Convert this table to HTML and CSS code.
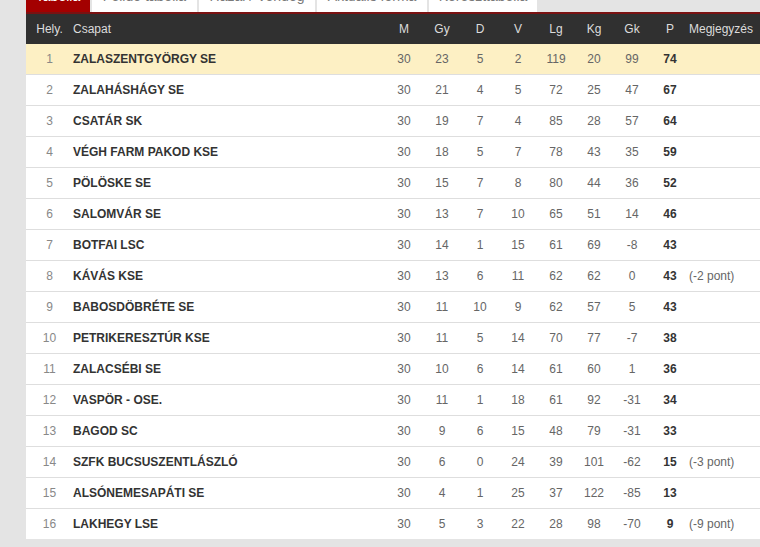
FILE: index.html
```html
<!DOCTYPE html>
<html lang="hu">
<head>
<meta charset="utf-8">
<title>Tabella</title>
<link rel="stylesheet" href="styles.css">
</head>
<body>
<div class="wrap">
  <nav class="tabs">
    <a class="tab active">Tabella</a>
    <a class="tab">Félidő tabella</a>
    <a class="tab">Hazai / Vendég</a>
    <a class="tab">Aktuális forma</a>
    <a class="tab">Kereszttabella</a>
  </nav>
  <table class="standings">
    <colgroup>
      <col class="c-pos"><col class="c-team">
      <col class="c-num"><col class="c-num"><col class="c-num"><col class="c-num">
      <col class="c-num"><col class="c-num"><col class="c-num"><col class="c-num">
      <col class="c-note">
    </colgroup>
    <thead>
      <tr><th class="pos">Hely.</th><th class="team">Csapat</th><th>M</th><th>Gy</th><th>D</th><th>V</th><th>Lg</th><th>Kg</th><th>Gk</th><th>P</th><th class="note">Megjegyzés</th></tr>
    </thead>
    <tbody>
      <tr class="lead"><td class="pos">1</td><td class="team">ZALASZENTGYÖRGY SE</td><td>30</td><td>23</td><td>5</td><td>2</td><td>119</td><td>20</td><td>99</td><td class="pts">74</td><td class="note"></td></tr>
      <tr><td class="pos">2</td><td class="team">ZALAHÁSHÁGY SE</td><td>30</td><td>21</td><td>4</td><td>5</td><td>72</td><td>25</td><td>47</td><td class="pts">67</td><td class="note"></td></tr>
      <tr><td class="pos">3</td><td class="team">CSATÁR SK</td><td>30</td><td>19</td><td>7</td><td>4</td><td>85</td><td>28</td><td>57</td><td class="pts">64</td><td class="note"></td></tr>
      <tr><td class="pos">4</td><td class="team">VÉGH FARM PAKOD KSE</td><td>30</td><td>18</td><td>5</td><td>7</td><td>78</td><td>43</td><td>35</td><td class="pts">59</td><td class="note"></td></tr>
      <tr><td class="pos">5</td><td class="team">PÖLÖSKE SE</td><td>30</td><td>15</td><td>7</td><td>8</td><td>80</td><td>44</td><td>36</td><td class="pts">52</td><td class="note"></td></tr>
      <tr><td class="pos">6</td><td class="team">SALOMVÁR SE</td><td>30</td><td>13</td><td>7</td><td>10</td><td>65</td><td>51</td><td>14</td><td class="pts">46</td><td class="note"></td></tr>
      <tr><td class="pos">7</td><td class="team">BOTFAI LSC</td><td>30</td><td>14</td><td>1</td><td>15</td><td>61</td><td>69</td><td>-8</td><td class="pts">43</td><td class="note"></td></tr>
      <tr><td class="pos">8</td><td class="team">KÁVÁS KSE</td><td>30</td><td>13</td><td>6</td><td>11</td><td>62</td><td>62</td><td>0</td><td class="pts">43</td><td class="note">(-2 pont)</td></tr>
      <tr><td class="pos">9</td><td class="team">BABOSDÖBRÉTE SE</td><td>30</td><td>11</td><td>10</td><td>9</td><td>62</td><td>57</td><td>5</td><td class="pts">43</td><td class="note"></td></tr>
      <tr><td class="pos">10</td><td class="team">PETRIKERESZTÚR KSE</td><td>30</td><td>11</td><td>5</td><td>14</td><td>70</td><td>77</td><td>-7</td><td class="pts">38</td><td class="note"></td></tr>
      <tr><td class="pos">11</td><td class="team">ZALACSÉBI SE</td><td>30</td><td>10</td><td>6</td><td>14</td><td>61</td><td>60</td><td>1</td><td class="pts">36</td><td class="note"></td></tr>
      <tr><td class="pos">12</td><td class="team">VASPÖR - OSE.</td><td>30</td><td>11</td><td>1</td><td>18</td><td>61</td><td>92</td><td>-31</td><td class="pts">34</td><td class="note"></td></tr>
      <tr><td class="pos">13</td><td class="team">BAGOD SC</td><td>30</td><td>9</td><td>6</td><td>15</td><td>48</td><td>79</td><td>-31</td><td class="pts">33</td><td class="note"></td></tr>
      <tr><td class="pos">14</td><td class="team">SZFK BUCSUSZENTLÁSZLÓ</td><td>30</td><td>6</td><td>0</td><td>24</td><td>39</td><td>101</td><td>-62</td><td class="pts">15</td><td class="note">(-3 pont)</td></tr>
      <tr><td class="pos">15</td><td class="team">ALSÓNEMESAPÁTI SE</td><td>30</td><td>4</td><td>1</td><td>25</td><td>37</td><td>122</td><td>-85</td><td class="pts">13</td><td class="note"></td></tr>
      <tr><td class="pos">16</td><td class="team">LAKHEGY LSE</td><td>30</td><td>5</td><td>3</td><td>22</td><td>28</td><td>98</td><td>-70</td><td class="pts">9</td><td class="note">(-9 pont)</td></tr>
    </tbody>
  </table>
</div>
</body>
</html>
```
FILE: styles.css
```css
html, body {
  margin: 0;
  padding: 0;
  background: #e4e4e4;
  overflow: hidden;
}

body {
  font-family: "Liberation Sans", Arial, sans-serif;
  color: #333;
}

.wrap {
  margin: -23px 0 0 26px;
}

.tabs {
  display: flex;
  gap: 2px;
  border-bottom: 2px solid #7a1212;
}

.tab {
  display: block;
  height: 35px;
  box-sizing: border-box;
  padding-top: 4px;
  line-height: 30px;
  font-size: 14px;
  text-align: center;
  color: #7a7a7a;
  background: #fff;
  white-space: nowrap;
  overflow: hidden;
}

.tab:nth-child(1) { width: 64px; }
.tab:nth-child(2) { width: 105px; }
.tab:nth-child(3) { width: 116px; }
.tab:nth-child(4) { width: 110px; }
.tab:nth-child(5) { width: 108px; }

.tab.active {
  background: #a30000;
  color: #fff;
}

.standings {
  width: 100%;
  border-collapse: collapse;
  table-layout: fixed;
  background: #fff;
  font-size: 12px;
}

.c-pos { width: 47px; }
.c-team { width: 312px; }
.c-num { width: 38px; }
.c-note { width: 71px; }

.standings th {
  background: #303030;
  color: #dcdcdc;
  font-weight: normal;
  height: 29px;
  line-height: 29px;
  padding: 1px 0 0;
  text-align: center;
  white-space: nowrap;
}

.standings td {
  height: 29px;
  line-height: 29px;
  padding: 1px 0 0;
  text-align: center;
  color: #666;
  border-bottom: 1px solid #dedede;
  white-space: nowrap;
}

.standings tbody tr:last-child td {
  border-bottom: none;
}

.standings tr.lead td {
  background: #fdf0c4;
}

.standings th.team,
.standings td.team {
  text-align: left;
}

.standings td.team {
  font-weight: bold;
  color: #333;
}

.standings td.pos {
  color: #888;
}

.standings td.pts {
  font-weight: bold;
  color: #333;
}

.standings th.note,
.standings td.note {
  text-align: left;
  color: #666;
}

.standings th.note {
  color: #dcdcdc;
}
```
